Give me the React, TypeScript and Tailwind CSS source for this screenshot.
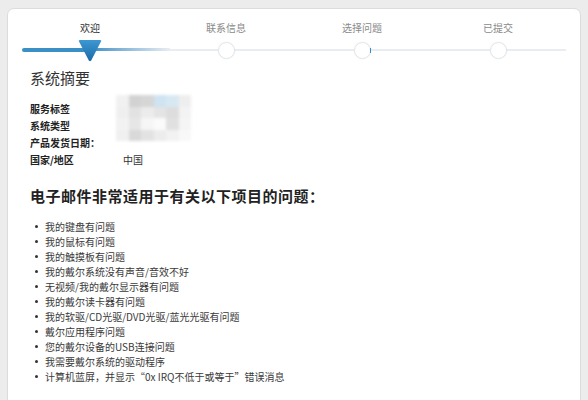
import React from 'react';

const steps = ['欢迎', '联系信息', '选择问题', '已提交'];

const summary = [
  { label: '服务标签', value: '' },
  { label: '系统类型', value: '' },
  { label: '产品发货日期：', value: '' },
  { label: '国家/地区', value: '中国' },
];

const issues = [
  '我的键盘有问题',
  '我的鼠标有问题',
  '我的触摸板有问题',
  '我的戴尔系统没有声音/音效不好',
  '无视频/我的戴尔显示器有问题',
  '我的戴尔读卡器有问题',
  '我的软驱/CD光驱/DVD光驱/蓝光光驱有问题',
  '戴尔应用程序问题',
  '您的戴尔设备的USB连接问题',
  '我需要戴尔系统的驱动程序',
  '计算机蓝屏，并显示“0x IRQ不低于或等于”错误消息',
];

// pixelated (masked) service tag area
const maskCells = [
  '#f1f1f1', '#d2d2d2', '#d6d6d6', '#cfe3f1', '#d8e8f3', '#eeeeee',
  '#efefef', '#e2e2e2', '#ececec', '#e4e4e4', '#dddddd', '#f3f3f3',
  '#f2f2f2', '#e6e6e6', '#f6f6f6', '#fbfbfb', '#e0e0e0', '#f5f5f5',
  '#f0f0f0', '#d9d9d9', '#e2e2e2', '#ececec', '#f2f2f2', '#f8f8f8',
];

const Stepper = () => (
  <div className="relative">
    <div className="grid grid-cols-4">
      {steps.map((s, i) => (
        <div key={s} className={`text-center text-[10px] leading-[14px] h-[14px] ${i === 0 ? 'text-[#333]' : 'text-[#8a8a8a]'}`}>
          {s}
        </div>
      ))}
    </div>
    <div className="relative h-[28px] mt-[1px]">
      <div className="absolute left-0 right-0 top-[13px] h-[2px] bg-[#e9edf1]" />
      <div className="absolute left-0 w-[70px] top-[12px] h-[4px] rounded-l-full bg-[#3a8fc5]" />
      <div className="absolute left-[68px] w-[80px] top-[12px] h-[3px] bg-gradient-to-r from-[#3a8fc5] to-[#e9edf1]" />
      <div className="grid grid-cols-4 relative h-full">
        {steps.map((s, i) => (
          <div key={s} className="flex justify-center">
            {i === 0 ? (
              <svg width="26" height="22" viewBox="0 0 26 22" className="mt-[4px]">
                <defs>
                  <linearGradient id="tri" x1="0" y1="0" x2="0" y2="1">
                    <stop offset="0" stopColor="#3d98d2" />
                    <stop offset="1" stopColor="#1b6aa8" />
                  </linearGradient>
                </defs>
                <path d="M2 1.5 Q1 0 3 0 L23 0 Q25 0 24 1.5 L14.2 20.5 Q13 22 11.8 20.5 Z" fill="url(#tri)" />
              </svg>
            ) : (
              <div className="relative mt-[6px] w-[17px] h-[17px] rounded-full bg-white border border-[#e3e6e9] shadow-[0_0_2px_rgba(0,0,0,0.06)]">
                {i === 2 && <div className="absolute right-[-1px] top-[5px] w-[1px] h-[5px] bg-[#3a8fc5]" />}
              </div>
            )}
          </div>
        ))}
      </div>
    </div>
  </div>
);

export default function App() {
  return (
    <div
      className="h-[400px] w-full overflow-hidden bg-[#ececec] pt-[8px] px-[7px]"
      style={{ fontFamily: '"Noto Sans CJK SC", "Liberation Sans", sans-serif' }}
    >
      <div className="h-[420px] bg-white border border-[#dcdcdc] rounded-t-[7px] px-[14px] pt-[12px]">
        <Stepper />

        <div className="pl-[8px]">
          <h2 className="text-[15px] leading-[20px] text-[#333] mt-[4px]">系统摘要</h2>

          <div className="relative mt-[12px]">
            {summary.map((r) => (
              <div key={r.label} className="flex h-[17px] items-center">
                <span className="w-[93px] text-[10px] font-bold text-[#222]">{r.label}</span>
                <span className="text-[10px] text-[#333]">{r.value}</span>
              </div>
            ))}
            <div className="absolute left-[86px] top-[-5px] w-[75px] h-[46px] grid grid-cols-6 grid-rows-4 blur-[1.5px]">
              {maskCells.map((c, i) => (
                <div key={i} style={{ backgroundColor: c }} />
              ))}
            </div>
          </div>

          <h3 className="mt-[18px] text-[15px] leading-[20px] font-bold tracking-[0.5px] text-[#222]">
            电子邮件非常适用于有关以下项目的问题：
          </h3>

          <ul className="mt-[13px] pl-[5px]">
            {issues.map((t) => (
              <li key={t} className="flex items-center h-[15px] text-[10px] text-[#3a3a3a]">
                <span className="w-[3px] h-[3px] rounded-full bg-[#333] mr-[7px]" />
                {t}
              </li>
            ))}
          </ul>

          <h3 className="mt-[14px] text-[15px] leading-[20px] font-bold text-[#222]">
            通过电子邮件联系我们之前，请确认以下事项：
          </h3>
        </div>
      </div>
    </div>
  );
}
